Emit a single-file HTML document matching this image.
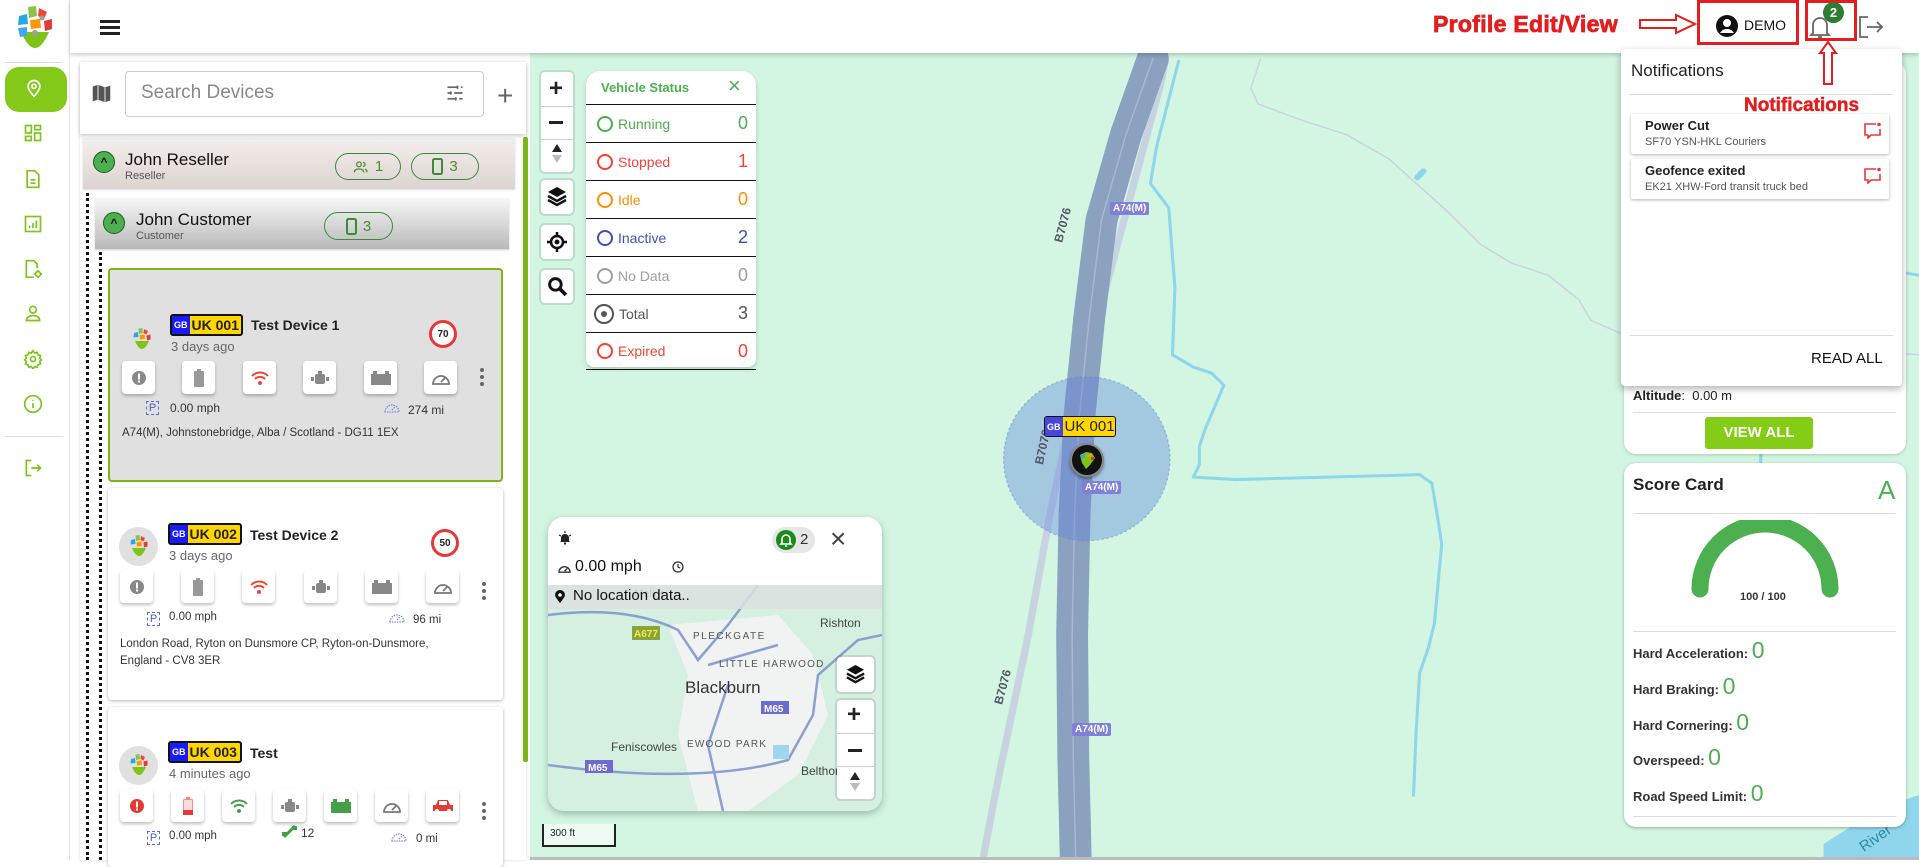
<!DOCTYPE html>
<html><head><meta charset="utf-8">
<style>
*{box-sizing:border-box;margin:0;padding:0}
body{width:1919px;height:860px;overflow:hidden;position:relative;font-family:"Liberation Sans",Arial,sans-serif;background:#fff;color:#222}
.a{position:absolute;white-space:nowrap}
.sb{left:0;top:0;width:70px;height:860px;background:#fff;border-right:1px solid #e6e6e6}
.ico{position:absolute;left:23px;width:20px;height:20px}
.top{left:70px;top:0;width:1849px;height:53px;background:#fff;box-shadow:0 2px 4px rgba(0,0,0,.2);z-index:5}
.btn{position:absolute;width:33px;height:33px;background:#fff;border-radius:4px;box-shadow:0 2px 3px rgba(0,0,0,.25);display:flex;align-items:center;justify-content:center}
.plate{position:absolute;height:22px;border:2px solid #111;border-radius:3px;background:#ffd600;font-weight:bold;font-size:14px;display:flex;align-items:center;overflow:hidden;white-space:nowrap}
.plate b{background:#1a1aff;color:#fff;font-size:9px;height:100%;display:flex;align-items:center;padding:0 2px;margin-right:2px}
.spd{position:absolute;width:28px;height:28px;border:3px solid #e53935;border-radius:50%;background:#fff;font-size:10px;font-weight:bold;display:flex;align-items:center;justify-content:center}
.dots{position:absolute;width:4px}
.dots i{display:block;width:4px;height:4px;border-radius:2px;background:#666;margin-bottom:3px}
.card{position:absolute;left:108px;width:395px;background:#fff;border-radius:4px;box-shadow:0 1px 3px rgba(0,0,0,.3)}
.sm{font-size:12px;color:#333}
.vs{position:absolute;left:0;width:170px;height:38px;border-top:1.5px solid #111;font-size:14px;display:flex;align-items:center;padding-left:11px}
.vs i{width:16px;height:16px;border:2px solid currentColor;border-radius:50%;margin-right:5px}
.vs span{position:absolute;right:8px;font-size:18px}
.mc{position:absolute;background:#fff;border-radius:4px;box-shadow:0 0 0 2px rgba(0,0,0,.1)}
.pill{position:absolute;height:27px;border:1.5px solid #3a8a3a;border-radius:14px;display:flex;align-items:center;justify-content:center;font-size:15px;color:#4a8f2a;gap:6px}
.sc{position:absolute;left:1633px;font-size:13px;font-weight:bold;color:#333;white-space:nowrap}
.sc span{color:#4caf50;font-size:23px;font-weight:normal}
</style></head><body>

<!-- MAP -->
<div class="a" style="left:530px;top:53px;width:1389px;height:807px;background:#d2f6e1"></div>
<svg class="a" style="left:0;top:0" width="1919" height="860" viewBox="0 0 1568 703" preserveAspectRatio="none">
 <g fill="none" stroke-linecap="round" stroke-linejoin="round">
  <path d="M1030 48 L1022 72 L1028 85 L1060 97 L1100 110 L1135 130 L1185 175 L1210 200 L1235 215 L1265 225 L1290 245 L1300 262 L1330 275 L1568 290" stroke="#cfd0e0" stroke-width="1.2"/>
  <path d="M963 50 L945 120 L940 150 L955 170 L960 235 L958 290 L975 300 L990 305 L1000 315 L985 350 L980 365 L980 380 L975 390 L1010 392 L1160 388 L1170 395 L1175 425 L1178 445 L1172 510 L1167 530 L1160 550 L1157 600 L1155 650" stroke="#8fd6ec" stroke-width="2.5"/>
  <path d="M1465 170 L1520 210 L1550 222 L1568 225" stroke="#8fd6ec" stroke-width="2.5"/>
  <path d="M1440 300 L1439 360 M1439 365 L1436 470" stroke="#8fd6ec" stroke-width="2.5"/>
  <path d="M1158 145 L1163 140" stroke="#8fd6ec" stroke-width="5"/>
  <path d="M952 50 L948 70 L905 230 L875 340 L858 420 L840 520 L815 640 L803 703" stroke="#c8d3e2" stroke-width="6"/>
  <path d="M942 48 L920 110 L900 180 L890 260 L882 340 L878 420 L876 520 L877 620 L879 703" stroke="#8ca0c0" stroke-width="26"/>
  <path d="M942 48 L920 110 L900 180 L890 260 L882 340 L878 420 L876 520 L877 620 L879 703" stroke="#a8b8d0" stroke-width="1.2"/>
  <path d="M1490 690 C1520 670 1550 655 1568 650 L1568 703 L1490 703Z" fill="#8fd6ec" stroke="none"/>
 </g>
 <ellipse cx="888" cy="375" rx="68" ry="67" fill="rgba(96,132,222,.4)" stroke="rgba(96,132,222,.5)" stroke-dasharray="2 2"/>
</svg>
<!-- map labels -->
<div class="a" style="left:1110px;top:202px;font-size:10px;font-weight:bold;color:#fff;background:#8080d8;padding:1px 3px;border-radius:2px">A74(M)</div>
<div class="a" style="left:1082px;top:481px;font-size:10px;font-weight:bold;color:#fff;background:#8080d8;padding:1px 3px;border-radius:2px">A74(M)</div>
<div class="a" style="left:1072px;top:723px;font-size:10px;font-weight:bold;color:#fff;background:#8080d8;padding:1px 3px;border-radius:2px">A74(M)</div>
<div class="a" style="left:1045px;top:218px;font-size:12px;color:#556;transform:rotate(-75deg);font-weight:bold">B7076</div>
<div class="a" style="left:1025px;top:440px;font-size:12px;color:#556;transform:rotate(-78deg);font-weight:bold">B7076</div>
<div class="a" style="left:985px;top:680px;font-size:12px;color:#556;transform:rotate(-75deg);font-weight:bold">B7076</div>
<div class="a" style="left:1858px;top:830px;font-size:15px;color:#2a8aaa;transform:rotate(-35deg)">River</div>
<!-- marker -->
<div class="plate" style="left:1044px;top:416px;width:72px;height:21px;border-width:1px;font-size:15px;font-weight:normal"><b style="background:#4646d8">GB</b>UK 001</div>
<div class="a" style="left:1070px;top:443px;width:34px;height:34px;border-radius:50%;background:#111;border:2px solid #888;box-shadow:0 2px 3px rgba(0,0,0,.4)">
<svg width="30" height="30" viewBox="0 0 30 30"><path d="M8 10 L14 7 L20 8 L23 13 L18 20 L14 24 L10 18Z" fill="#7cc417"/><rect x="9" y="9" width="4" height="4" fill="#3ba7e0"/><rect x="15" y="9" width="4" height="3" fill="#f4a000"/><rect x="19" y="12" width="3" height="3" fill="#e33"/></svg></div>

<!-- SIDEBAR -->
<div class="a sb"></div>
<svg class="a" style="left:15px;top:4px" width="40" height="52" viewBox="0 0 40 52">
 <path d="M6 28 Q20 60 34 28Z" fill="#7cc417"/>
 <path d="M13 3 L21 2 L22 12 L14 14Z" fill="#8bc34a"/><path d="M24 4 L32 8 L29 15 L23 12Z" fill="#f44336"/>
 <path d="M4 12 L12 10 L13 20 L3 21Z" fill="#29a8e0"/><path d="M15 16 L25 15 L26 24 L16 25Z" fill="#ff9800"/>
 <path d="M29 17 L37 15 L37 25 L30 27Z" fill="#e53935"/><path d="M3 24 L12 23 L12 32 L5 33Z" fill="#42a5f5"/>
 <circle cx="20" cy="29" r="3" fill="#9e9e9e"/><circle cx="27" cy="14" r="2.5" fill="#9e9e9e"/>
</svg>
<div class="a" style="left:5px;top:62px;width:58px;height:1px;background:#ddd"></div>
<div class="a" style="left:5px;top:67px;width:62px;height:45px;background:#84c91a;border-radius:14px"></div>
<svg class="ico" style="top:78px;left:24px" viewBox="0 0 24 24" fill="none" stroke="#fff" stroke-width="2"><path d="M12 22s7-7 7-12a7 7 0 0 0-14 0c0 5 7 12 7 12z"/><circle cx="12" cy="10" r="2.5"/></svg>
<svg class="ico" style="top:123px" viewBox="0 0 24 24" fill="none" stroke="#7cc417" stroke-width="2"><rect x="3" y="3" width="7" height="9"/><rect x="14" y="3" width="7" height="5"/><rect x="14" y="12" width="7" height="9"/><rect x="3" y="16" width="7" height="5"/></svg>
<svg class="ico" style="top:169px" viewBox="0 0 24 24" fill="none" stroke="#7cc417" stroke-width="2"><path d="M5 2h9l5 5v15H5z"/><path d="M9 13h6M9 17h6"/></svg>
<svg class="ico" style="top:214px" viewBox="0 0 24 24" fill="none" stroke="#7cc417" stroke-width="2"><rect x="3" y="3" width="18" height="18"/><path d="M8 17v-3M12 17v-6M16 17v-9"/></svg>
<svg class="ico" style="top:259px" viewBox="0 0 24 24" fill="none" stroke="#7cc417" stroke-width="2"><path d="M13 22H4V2h9l4 4v5"/><circle cx="18" cy="18" r="3"/><path d="M18 13v2M18 21v2M13 18h2M21 18h2"/></svg>
<svg class="ico" style="top:303px" viewBox="0 0 24 24" fill="none" stroke="#7cc417" stroke-width="2"><circle cx="12" cy="8" r="4"/><path d="M4 21c0-4 4-6 8-6s8 2 8 6z"/></svg>
<svg class="ico" style="top:349px" viewBox="0 0 24 24" fill="none" stroke="#7cc417" stroke-width="2"><circle cx="12" cy="12" r="3"/><path d="M12 2l2 3 3-1 1 3 3 1-1 3 2 2-2 2 1 3-3 1-1 3-3-1-2 3-2-3-3 1-1-3-3-1 1-3-2-2 2-2-1-3 3-1 1-3 3 1z"/></svg>
<svg class="ico" style="top:394px" viewBox="0 0 24 24" fill="none" stroke="#7cc417" stroke-width="2"><circle cx="12" cy="12" r="10"/><path d="M12 11v6M12 7v1"/></svg>
<div class="a" style="left:5px;top:436px;width:58px;height:1px;background:#ddd"></div>
<svg class="ico" style="top:458px" viewBox="0 0 24 24" fill="none" stroke="#7cc417" stroke-width="2"><path d="M10 3H4v18h6"/><path d="M10 12h11M17 8l4 4-4 4"/></svg>

<!-- TOP BAR -->
<div class="a top"></div>
<div class="a" style="left:100px;top:20px;width:20px;z-index:6"><i style="display:block;height:2.5px;background:#222;margin-bottom:3.5px"></i><i style="display:block;height:2.5px;background:#222;margin-bottom:3.5px"></i><i style="display:block;height:2.5px;background:#222"></i></div>
<div class="a" style="left:1433px;top:11px;font-size:23px;font-weight:900;color:#e41e1e;z-index:6;font-family:'Liberation Sans',sans-serif;-webkit-text-stroke:.8px #e41e1e;letter-spacing:.3px">Profile Edit/View</div>
<svg class="a" style="left:1639px;top:13px;z-index:6" width="58" height="22"><path d="M1 7h36V2l19 9-19 9v-5H1z" fill="#fff" stroke="#e41e1e" stroke-width="2"/></svg>
<div class="a" style="left:1697px;top:0;width:102px;height:45px;border:3px solid #e41e1e;z-index:6"></div>
<svg class="a" style="left:1715px;top:14px;z-index:6" width="24" height="24" viewBox="0 0 24 24"><circle cx="12" cy="12" r="11" fill="#111"/><circle cx="12" cy="9" r="4" fill="#fff"/><path d="M5 19c2-3 4-4 7-4s5 1 7 4" fill="#fff"/></svg>
<div class="a" style="left:1744px;top:17px;font-size:14px;z-index:6;color:#111">DEMO</div>
<div class="a" style="left:1805px;top:0;width:52px;height:41px;border:3px solid #e41e1e;z-index:6"></div>
<svg class="a" style="left:1809px;top:14px;z-index:6" width="22" height="26" viewBox="0 0 22 26" fill="none" stroke="#666" stroke-width="1.8"><path d="M4 19V11a7 7 0 0 1 14 0v8l2 2H2z"/><path d="M9 23h4"/></svg>
<div class="a" style="left:1823px;top:2px;width:21px;height:21px;border-radius:50%;background:#2e7d32;color:#fff;font-size:13px;font-weight:bold;text-align:center;line-height:21px;z-index:7">2</div>
<svg class="a" style="left:1818px;top:40px;z-index:10" width="20" height="46"><path d="M10 2l8 11h-4v31H6V13H2z" fill="#fff" stroke="#e41e1e" stroke-width="2"/></svg>
<svg class="a" style="left:1858px;top:15px;z-index:6" width="26" height="24" viewBox="0 0 26 24" fill="none" stroke="#666" stroke-width="1.8"><path d="M10 2H2v20h8"/><path d="M9 12h15M19 7l5 5-5 5"/></svg>

<!-- LEFT PANEL -->
<div class="a" style="left:80px;top:62px;width:446px;height:798px;background:#fff;box-shadow:0 0 3px rgba(0,0,0,.15)"></div>
<div class="a" style="left:80px;top:62px;width:446px;height:72px;background:#fff;box-shadow:0 2px 4px rgba(0,0,0,.2);z-index:2"></div>
<svg class="a" style="left:91px;top:83px;z-index:3" width="21" height="21" viewBox="0 0 24 24"><path d="M2 4l6-2 8 3 6-2v17l-6 2-8-3-6 2z" fill="#555"/><path d="M8 2v17M16 5v17" stroke="#fff" stroke-width="1"/></svg>
<div class="a" style="left:125px;top:71px;width:359px;height:46px;border:1px solid #ccc;border-radius:4px;z-index:3"></div>
<div class="a" style="left:141px;top:82px;font-size:19px;color:#888;z-index:3">Search Devices</div>
<svg class="a" style="left:445px;top:83px;z-index:3" width="20" height="20" viewBox="0 0 24 24" stroke="#666" stroke-width="2"><path d="M3 5h12M19 5h2M3 12h4M11 12h10M3 19h10M17 19h4M15 3v4M7 10v4M13 17v4"/></svg>
<div class="a" style="left:497px;top:80px;font-size:28px;color:#666;z-index:3;font-weight:300">+</div>
<div class="a" style="left:523px;top:137px;width:5px;height:625px;background:#7cb518;border-radius:2px"></div>

<!-- reseller -->
<div class="a" style="left:83px;top:138px;width:432px;height:51px;background:linear-gradient(#f3eeec,#ddd4d1);box-shadow:0 1px 2px rgba(0,0,0,.15)"></div>
<div class="a" style="left:93px;top:151px;width:22px;height:22px;border-radius:50%;background:#4caf50;border:1.5px solid #1b5e20;color:#111;font-size:12px;text-align:center;line-height:20px;font-weight:bold">^</div>
<div class="a" style="left:125px;top:150px;font-size:17px;color:#111">John Reseller</div>
<div class="a" style="left:125px;top:170px;font-size:11px;color:#555">Reseller</div>
<div class="pill" style="left:335px;top:153px;width:66px"><svg width="16" height="14" viewBox="0 0 24 20" fill="none" stroke="#4a8f2a" stroke-width="2"><circle cx="9" cy="6" r="3.5"/><path d="M2 18c0-4 3-5 7-5s7 1 7 5"/><path d="M15 3a3 3 0 0 1 0 6M18 13c2 1 3 2 3 5"/></svg>1</div>
<div class="pill" style="left:411px;top:153px;width:68px"><svg width="11" height="17" viewBox="0 0 11 17"><rect x="1" y="1" width="9" height="15" rx="1.5" fill="none" stroke="#3a8a3a" stroke-width="2"/></svg>3</div>
<div class="a" style="left:86px;top:193px;height:667px;border-left:3px dotted #111"></div>
<!-- customer -->
<div class="a" style="left:95px;top:198px;width:414px;height:51px;background:linear-gradient(#f7f7f7,#b9b9b9);box-shadow:0 1px 2px rgba(0,0,0,.2)"></div>
<div class="a" style="left:103px;top:212px;width:22px;height:22px;border-radius:50%;background:#4caf50;border:1.5px solid #1b5e20;color:#111;font-size:12px;text-align:center;line-height:20px;font-weight:bold">^</div>
<div class="a" style="left:136px;top:210px;font-size:17px;color:#111">John Customer</div>
<div class="a" style="left:136px;top:230px;font-size:11px;color:#555">Customer</div>
<div class="pill" style="left:324px;top:212px;width:69px;height:28px"><svg width="11" height="17" viewBox="0 0 11 17"><rect x="1" y="1" width="9" height="15" rx="1.5" fill="none" stroke="#3a8a3a" stroke-width="2"/></svg>3</div>
<div class="a" style="left:99px;top:252px;height:608px;border-left:3px dotted #111"></div>

<!-- Card 1 -->
<div class="card" style="top:268px;height:214px;background:#e0e0e0;border:2px solid #7cb518;box-shadow:none"></div>
<svg class="a" style="left:131px;top:327px" width="22" height="26" viewBox="0 0 40 52"><path d="M6 28 Q20 60 34 28Z" fill="#7cc417"/><path d="M13 3 L21 2 L22 12 L14 14Z" fill="#8bc34a"/><path d="M24 4 L32 8 L29 15 L23 12Z" fill="#f44336"/><path d="M4 12 L12 10 L13 20 L3 21Z" fill="#29a8e0"/><path d="M15 16 L25 15 L26 24 L16 25Z" fill="#ff9800"/><path d="M29 17 L37 15 L37 25 L30 27Z" fill="#e53935"/></svg>
<div class="plate" style="left:170px;top:314px;width:73px"><b>GB</b>UK 001</div>
<div class="a" style="left:251px;top:317px;font-size:14px;font-weight:bold">Test Device 1</div>
<div class="a" style="left:171px;top:339px;font-size:13px;color:#666">3 days ago</div>
<div class="spd" style="left:429px;top:320px">70</div>

<!-- Card 2 -->
<div class="card" style="top:488px;height:212px"></div>
<div class="a" style="left:119px;top:527px;width:39px;height:39px;border-radius:50%;background:#e0e0e0"></div>
<svg class="a" style="left:128px;top:534px" width="22" height="26" viewBox="0 0 40 52"><path d="M6 28 Q20 60 34 28Z" fill="#7cc417"/><path d="M13 3 L21 2 L22 12 L14 14Z" fill="#8bc34a"/><path d="M24 4 L32 8 L29 15 L23 12Z" fill="#f44336"/><path d="M4 12 L12 10 L13 20 L3 21Z" fill="#29a8e0"/><path d="M15 16 L25 15 L26 24 L16 25Z" fill="#ff9800"/><path d="M29 17 L37 15 L37 25 L30 27Z" fill="#e53935"/></svg>
<div class="plate" style="left:168px;top:523px;width:74px"><b>GB</b>UK 002</div>
<div class="a" style="left:250px;top:527px;font-size:14px;font-weight:bold">Test Device 2</div>
<div class="a" style="left:169px;top:548px;font-size:13px;color:#666">3 days ago</div>
<div class="spd" style="left:431px;top:529px">50</div>

<!-- Card 3 -->
<div class="card" style="top:707px;height:160px"></div>
<div class="a" style="left:119px;top:746px;width:39px;height:39px;border-radius:50%;background:#e0e0e0"></div>
<svg class="a" style="left:128px;top:753px" width="22" height="26" viewBox="0 0 40 52"><path d="M6 28 Q20 60 34 28Z" fill="#7cc417"/><path d="M13 3 L21 2 L22 12 L14 14Z" fill="#8bc34a"/><path d="M24 4 L32 8 L29 15 L23 12Z" fill="#f44336"/><path d="M4 12 L12 10 L13 20 L3 21Z" fill="#29a8e0"/><path d="M15 16 L25 15 L26 24 L16 25Z" fill="#ff9800"/><path d="M29 17 L37 15 L37 25 L30 27Z" fill="#e53935"/></svg>
<div class="plate" style="left:168px;top:741px;width:74px"><b>GB</b>UK 003</div>
<div class="a" style="left:250px;top:745px;font-size:14px;font-weight:bold">Test</div>
<div class="a" style="left:169px;top:766px;font-size:13px;color:#666">4 minutes ago</div>

<!-- Card1 buttons -->
<div class="btn" style="left:122px;top:361px"><svg width="16" height="16" viewBox="0 0 16 16"><circle cx="8" cy="8" r="7" fill="#888"/><rect x="7" y="3.5" width="2" height="6" fill="#fff"/><rect x="7" y="10.5" width="2" height="2" fill="#fff"/></svg></div>
<div class="btn" style="left:182px;top:361px"><svg width="10" height="18"><rect x="3" y="0" width="4" height="2" fill="#999"/><rect x="0" y="2" width="10" height="16" rx="1" fill="#999"/></svg></div>
<div class="btn" style="left:243px;top:361px"><svg width="18" height="14" viewBox="0 0 18 14" fill="none" stroke="#f44336" stroke-width="2"><path d="M1 5a11 11 0 0 1 16 0M4 8a7 7 0 0 1 10 0"/><circle cx="9" cy="12" r="1" fill="#f44336"/></svg></div>
<div class="btn" style="left:303px;top:361px"><svg width="20" height="14" viewBox="0 0 20 14"><rect x="5" y="3" width="10" height="10" rx="2" fill="#888"/><rect x="8" y="0" width="4" height="3" fill="#888"/><rect x="1" y="6" width="3" height="4" fill="#888"/><rect x="16" y="6" width="3" height="4" fill="#888"/></svg></div>
<div class="btn" style="left:364px;top:361px"><svg width="20" height="14"><rect x="0" y="3" width="20" height="11" fill="#888"/><rect x="2" y="0" width="4" height="3" fill="#888"/><rect x="14" y="0" width="4" height="3" fill="#888"/></svg></div>
<div class="btn" style="left:424px;top:361px"><svg width="20" height="16" viewBox="0 0 20 16" fill="none" stroke="#777" stroke-width="1.8"><path d="M2 14a8 8 0 1 1 16 0z"/><path d="M10 12l4-4"/></svg></div>
<div class="dots" style="left:480px;top:368px"><i></i><i></i><i></i></div>
<div class="a" style="left:146px;top:401px;width:13px;height:14px;border:1px dashed #5b6ed0;color:#4a5cc8;font-size:11px;text-align:center;line-height:12px">P</div>
<div class="a sm" style="left:170px;top:401px">0.00 mph</div>
<svg class="a" style="left:384px;top:400px" width="16" height="14" viewBox="0 0 16 14" fill="none" stroke="#7a8ad8" stroke-width="1.2" stroke-dasharray="1.5 1"><path d="M1 12a7 7 0 1 1 14 0z"/><path d="M8 10l3-3"/></svg>
<div class="a sm" style="left:408px;top:403px">274 mi</div>
<div class="a sm" style="left:122px;top:427px;font-size:11.5px">A74(M), Johnstonebridge, Alba / Scotland - DG11 1EX</div>

<!-- Card2 buttons -->
<div class="btn" style="left:120px;top:570px"><svg width="16" height="16" viewBox="0 0 16 16"><circle cx="8" cy="8" r="7" fill="#888"/><rect x="7" y="3.5" width="2" height="6" fill="#fff"/><rect x="7" y="10.5" width="2" height="2" fill="#fff"/></svg></div>
<div class="btn" style="left:181px;top:570px"><svg width="10" height="18"><rect x="3" y="0" width="4" height="2" fill="#999"/><rect x="0" y="2" width="10" height="16" rx="1" fill="#999"/></svg></div>
<div class="btn" style="left:242px;top:570px"><svg width="18" height="14" viewBox="0 0 18 14" fill="none" stroke="#f44336" stroke-width="2"><path d="M1 5a11 11 0 0 1 16 0M4 8a7 7 0 0 1 10 0"/><circle cx="9" cy="12" r="1" fill="#f44336"/></svg></div>
<div class="btn" style="left:304px;top:570px"><svg width="20" height="14" viewBox="0 0 20 14"><rect x="5" y="3" width="10" height="10" rx="2" fill="#888"/><rect x="8" y="0" width="4" height="3" fill="#888"/><rect x="1" y="6" width="3" height="4" fill="#888"/><rect x="16" y="6" width="3" height="4" fill="#888"/></svg></div>
<div class="btn" style="left:365px;top:570px"><svg width="20" height="14"><rect x="0" y="3" width="20" height="11" fill="#888"/><rect x="2" y="0" width="4" height="3" fill="#888"/><rect x="14" y="0" width="4" height="3" fill="#888"/></svg></div>
<div class="btn" style="left:426px;top:570px"><svg width="20" height="16" viewBox="0 0 20 16" fill="none" stroke="#777" stroke-width="1.8"><path d="M2 14a8 8 0 1 1 16 0z"/><path d="M10 12l4-4"/></svg></div>
<div class="dots" style="left:482px;top:582px"><i></i><i></i><i></i></div>
<div class="a" style="left:147px;top:612px;width:13px;height:14px;border:1px dashed #5b6ed0;color:#4a5cc8;font-size:11px;text-align:center;line-height:12px">P</div>
<div class="a sm" style="left:169px;top:611px;font-size:11.5px">0.00 mph</div>
<svg class="a" style="left:389px;top:610px" width="16" height="14" viewBox="0 0 16 14" fill="none" stroke="#7a8ad8" stroke-width="1.2" stroke-dasharray="1.5 1"><path d="M1 12a7 7 0 1 1 14 0z"/><path d="M8 10l3-3"/></svg>
<div class="a sm" style="left:413px;top:614px;font-size:11.5px">96 mi</div>
<div class="a sm" style="left:120px;top:636px;font-size:11.5px;line-height:17px">London Road, Ryton on Dunsmore CP, Ryton-on-Dunsmore,<br>England - CV8 3ER</div>

<!-- Card3 buttons -->
<div class="btn" style="left:120px;top:789px"><svg width="16" height="16" viewBox="0 0 16 16"><circle cx="8" cy="8" r="7" fill="#e53935"/><rect x="7" y="3.5" width="2" height="6" fill="#fff"/><rect x="7" y="10.5" width="2" height="2" fill="#fff"/></svg></div>
<div class="btn" style="left:171px;top:789px"><svg width="10" height="18"><rect x="3" y="0" width="4" height="2" fill="#f77"/><rect x="0.5" y="2.5" width="9" height="15" rx="1" fill="#fdd" stroke="#f88"/><rect x="0" y="13" width="10" height="5" fill="#e53935"/></svg></div>
<div class="btn" style="left:222px;top:789px"><svg width="18" height="14" viewBox="0 0 18 14" fill="none" stroke="#43a047" stroke-width="2"><path d="M1 5a11 11 0 0 1 16 0M4 8a7 7 0 0 1 10 0"/><circle cx="9" cy="12" r="1" fill="#43a047"/></svg></div>
<div class="btn" style="left:273px;top:789px"><svg width="20" height="14" viewBox="0 0 20 14"><rect x="5" y="3" width="10" height="10" rx="2" fill="#888"/><rect x="8" y="0" width="4" height="3" fill="#888"/><rect x="1" y="6" width="3" height="4" fill="#888"/><rect x="16" y="6" width="3" height="4" fill="#888"/></svg></div>
<div class="btn" style="left:324px;top:789px"><svg width="20" height="14"><rect x="0" y="3" width="20" height="11" fill="#43a047"/><rect x="2" y="0" width="4" height="3" fill="#43a047"/><rect x="14" y="0" width="4" height="3" fill="#43a047"/></svg></div>
<div class="btn" style="left:375px;top:789px"><svg width="20" height="16" viewBox="0 0 20 16" fill="none" stroke="#777" stroke-width="1.8"><path d="M2 14a8 8 0 1 1 16 0z"/><path d="M10 12l4-4"/></svg></div>
<div class="btn" style="left:426px;top:789px"><svg width="22" height="14" viewBox="0 0 22 14"><path d="M4 6l2-5h10l2 5h3v6H1V6z" fill="#e53935"/><rect x="7" y="2" width="8" height="4" fill="#fff"/><circle cx="5" cy="12" r="2" fill="#fff"/><circle cx="17" cy="12" r="2" fill="#fff"/></svg></div>
<div class="dots" style="left:482px;top:802px"><i></i><i></i><i></i></div>
<div class="a" style="left:147px;top:831px;width:13px;height:14px;border:1px dashed #5b6ed0;color:#4a5cc8;font-size:11px;text-align:center;line-height:12px">P</div>
<div class="a sm" style="left:169px;top:830px;font-size:11.5px">0.00 mph</div>
<svg class="a" style="left:281px;top:823px" width="17" height="17" viewBox="0 0 17 17"><path d="M3 14l11-11" stroke="#43a047" stroke-width="3"/><rect x="1" y="9" width="5" height="4" fill="#43a047"/><rect x="11" y="3" width="5" height="4" fill="#43a047"/></svg>
<div class="a sm" style="left:301px;top:826px;font-size:12px">12</div>
<svg class="a" style="left:391px;top:829px" width="16" height="14" viewBox="0 0 16 14" fill="none" stroke="#7a8ad8" stroke-width="1.2" stroke-dasharray="1.5 1"><path d="M1 12a7 7 0 1 1 14 0z"/><path d="M8 10l3-3"/></svg>
<div class="a sm" style="left:416px;top:833px;font-size:11.5px">0 mi</div>

<!-- MAP CONTROLS -->
<div class="mc" style="left:541px;top:72px;width:32px;height:100px"></div>
<div class="a" style="left:549px;top:75px;font-size:24px;font-weight:bold">+</div>
<div class="a" style="left:541px;top:106px;width:32px;height:1px;background:#ccc"></div>
<div class="a" style="left:549px;top:121px;width:14px;height:3px;background:#222"></div>
<div class="a" style="left:541px;top:139px;width:32px;height:1px;background:#ccc"></div>
<div class="a" style="left:552px;top:144px;width:0;height:0;border:5px solid transparent;border-bottom:8px solid #222;border-top:0"></div>
<div class="a" style="left:552px;top:155px;width:0;height:0;border:5px solid transparent;border-top:8px solid #bbb;border-bottom:0"></div>
<div class="mc" style="left:541px;top:180px;width:32px;height:34px"><svg style="margin:6px" width="20" height="22" viewBox="0 0 20 22"><path d="M10 1l9 5-9 5-9-5z" fill="#111"/><path d="M1 10l9 5 9-5M1 14l9 5 9-5" fill="none" stroke="#111" stroke-width="2.5"/></svg></div>
<div class="mc" style="left:541px;top:225px;width:32px;height:34px"><svg style="margin:6px" width="20" height="22" viewBox="0 0 20 20"><circle cx="10" cy="10" r="6" fill="none" stroke="#111" stroke-width="2.5"/><circle cx="10" cy="10" r="2.5" fill="#111"/><path d="M10 0v4M10 16v4M0 10h4M16 10h4" stroke="#111" stroke-width="2.5"/></svg></div>
<div class="mc" style="left:541px;top:270px;width:32px;height:33px"><svg style="margin:6px" width="21" height="21" viewBox="0 0 20 20"><circle cx="8" cy="8" r="5.5" fill="none" stroke="#111" stroke-width="2.8"/><path d="M12 12l6 6" stroke="#111" stroke-width="3.5"/></svg></div>

<!-- VEHICLE STATUS -->
<div class="a" style="left:586px;top:71px;width:170px;height:296px;background:#fff;border-radius:14px 14px 8px 8px;box-shadow:0 2px 4px rgba(0,0,0,.2)">
 <div class="a" style="left:15px;top:9px;font-size:13px;font-weight:bold;color:#4caf50">Vehicle Status</div>
 <div class="a" style="left:142px;top:2px;font-size:22px;color:#4caf50">×</div>
 <div class="vs" style="top:33px;color:#4caf50"><i></i>Running<span>0</span></div>
 <div class="vs" style="top:71px;color:#f44336"><i></i>Stopped<span>1</span></div>
 <div class="vs" style="top:109px;color:#ff8f00"><i></i>Idle<span>0</span></div>
 <div class="vs" style="top:147px;color:#3f51b5"><i></i>Inactive<span>2</span></div>
 <div class="vs" style="top:185px;color:#9e9e9e"><i></i>No Data<span>0</span></div>
 <div class="vs" style="top:223px;color:#555;padding-left:8px"><i style="width:20px;height:20px;border-width:2.5px;display:flex;align-items:center;justify-content:center"><b style="width:6px;height:6px;border-radius:3px;background:#555"></b></i>Total<span>3</span></div>
 <div class="vs" style="top:261px;color:#f44336;border-bottom:1.5px solid #111"><i></i>Expired<span>0</span></div>
</div>

<!-- MINI POPUP -->
<div class="a" style="left:548px;top:517px;width:334px;height:294px;border-radius:16px;overflow:hidden;background:#d7f2df;box-shadow:0 3px 8px rgba(0,0,0,.25)">
 <svg class="a" style="left:0;top:68px" width="334" height="226" viewBox="0 0 334 226">
  <rect width="334" height="226" fill="#d5efe0"/>
  <path d="M120 40 L230 30 L265 70 L280 130 L250 190 L200 226 L150 226 L130 150 L140 90Z" fill="#f1f3f3"/>
  <g fill="none" stroke="#8b9fd0" stroke-width="2.5"><path d="M0 30 Q80 20 130 45 L150 75 L180 40 L210 0"/><path d="M0 180 Q150 200 240 175 L265 130 L270 90 L310 55 L334 50"/><path d="M180 100 L160 160 L175 226"/><path d="M160 80 L230 60"/></g>
  <rect x="84" y="41" width="28" height="14" fill="#86a53a"/><text x="86" y="52" font-size="10" fill="#ffe14d" font-weight="bold" font-family="Liberation Sans">A677</text>
  <rect x="213" y="116" width="28" height="13" fill="#6b6bd0"/><text x="216" y="127" font-size="10" fill="#fff" font-weight="bold" font-family="Liberation Sans">M65</text>
  <rect x="37" y="175" width="28" height="13" fill="#6b6bd0"/><text x="40" y="186" font-size="10" fill="#fff" font-weight="bold" font-family="Liberation Sans">M65</text>
  <rect x="225" y="160" width="16" height="14" fill="#9fd8ee"/>
  <text x="86" y="12" font-size="11" fill="#555" font-family="Liberation Sans">Mellor</text>
  <text x="145" y="54" font-size="10" fill="#555" letter-spacing="1.5" font-family="Liberation Sans">PLECKGATE</text>
  <text x="272" y="42" font-size="12" fill="#444" font-family="Liberation Sans">Rishton</text>
  <text x="171" y="82" font-size="10" fill="#555" letter-spacing="1.2" font-family="Liberation Sans">LITTLE HARWOOD</text>
  <text x="137" y="108" font-size="17" fill="#333" font-family="Liberation Sans">Blackburn</text>
  <text x="63" y="166" font-size="12" fill="#444" font-family="Liberation Sans">Feniscowles</text>
  <text x="139" y="162" font-size="10" fill="#555" letter-spacing="1.2" font-family="Liberation Sans">EWOOD PARK</text>
  <text x="253" y="190" font-size="12" fill="#444" font-family="Liberation Sans">Belthorn</text>
 </svg>
 <div class="a" style="left:0;top:0;width:334px;height:68px;background:#fff"></div>
 <div class="a" style="left:0;top:68px;width:334px;height:24px;background:rgba(220,225,225,.85)"></div>
 <svg class="a" style="left:10px;top:14px" width="14" height="14" viewBox="0 0 14 14"><path d="M3 10V7a4 4 0 0 1 8 0v3l1 1H2z" fill="#222"/><rect x="6" y="11.5" width="2" height="2" fill="#222"/><path d="M1 4l2 1M13 4l-2 1M7 0v2" stroke="#222" stroke-width="1.2"/></svg>
 <div class="a" style="left:224px;top:10px;width:43px;height:26px;border-radius:13px;background:#e6e6e6"></div>
 <div class="a" style="left:228px;top:13px;width:20px;height:20px;border-radius:50%;background:#1b8a1b"><svg width="20" height="20" viewBox="0 0 20 20" fill="none" stroke="#fff" stroke-width="1.6"><path d="M6 13V9a4 4 0 0 1 8 0v4l1 1H5z"/><path d="M9 16h2"/></svg></div>
 <div class="a" style="left:252px;top:14px;font-size:15px;color:#333">2</div>
 <div class="a" style="left:282px;top:6px;font-size:28px;color:#444;font-weight:300">×</div>
 <svg class="a" style="left:10px;top:46px" width="13" height="11" viewBox="0 0 14 12" fill="none" stroke="#333" stroke-width="1.5"><path d="M1 10a6 6 0 1 1 12 0z"/><path d="M7 9l3-3"/></svg>
 <div class="a" style="left:27px;top:41px;font-size:16px;color:#111">0.00 mph</div>
 <svg class="a" style="left:124px;top:44px" width="12" height="12" viewBox="0 0 12 12" fill="none" stroke="#333" stroke-width="1.3"><circle cx="6" cy="6" r="5"/><path d="M6 3v3l2 1"/></svg>
 <svg class="a" style="left:7px;top:73px" width="10" height="13" viewBox="0 0 10 13"><path d="M5 13S0 7 0 5a5 5 0 0 1 10 0c0 2-5 8-5 8z" fill="#111"/><circle cx="5" cy="5" r="1.8" fill="#fff"/></svg>
 <div class="a" style="left:25px;top:70px;font-size:15px;color:#111">No location data..</div>
 <div class="a" style="left:289px;top:140px;width:37px;height:35px;background:#fff;border-radius:4px;box-shadow:0 0 0 2px rgba(0,0,0,.1)"><svg style="margin:7px 8px" width="21" height="21" viewBox="0 0 20 22"><path d="M10 1l9 5-9 5-9-5z" fill="#111"/><path d="M1 10l9 5 9-5M1 14l9 5 9-5" fill="none" stroke="#111" stroke-width="2.5"/></svg></div>
 <div class="a" style="left:289px;top:183px;width:37px;height:99px;background:#fff;border-radius:4px;box-shadow:0 0 0 2px rgba(0,0,0,.1)">
  <div class="a" style="left:10px;top:1px;font-size:24px;font-weight:bold">+</div>
  <div class="a" style="left:0;top:33px;width:37px;height:1px;background:#ccc"></div>
  <div class="a" style="left:11px;top:49px;width:14px;height:3px;background:#222"></div>
  <div class="a" style="left:0;top:66px;width:37px;height:1px;background:#ccc"></div>
  <div class="a" style="left:13px;top:72px;border:5px solid transparent;border-bottom:8px solid #222;border-top:0"></div>
  <div class="a" style="left:13px;top:83px;border:5px solid transparent;border-top:8px solid #bbb;border-bottom:0"></div>
 </div>
</div>
<div class="a" style="left:542px;top:824px;width:74px;height:23px;border:2px solid #222;border-top:none;background:rgba(255,255,255,.6);font-size:10px;padding:4px 0 0 6px">300 ft</div>

<!-- RIGHT CARDS -->
<div class="a" style="left:1624px;top:62px;width:282px;height:392px;background:#fff;border-radius:12px;box-shadow:0 1px 3px rgba(0,0,0,.2)"></div>
<div class="a" style="left:1633px;top:388px;font-size:13px;color:#222"><b>Altitude</b>:&nbsp; 0.00 m</div>
<div class="a" style="left:1633px;top:412px;width:263px;height:1px;background:#ddd"></div>
<div class="a" style="left:1705px;top:417px;width:108px;height:32px;background:#84cc16;border-radius:3px;color:#fff;font-weight:bold;font-size:15px;text-align:center;line-height:32px">VIEW ALL</div>

<div class="a" style="left:1624px;top:463px;width:282px;height:364px;background:#fff;border-radius:12px;box-shadow:0 1px 3px rgba(0,0,0,.3)"></div>
<div class="a" style="left:1633px;top:475px;font-size:17px;font-weight:bold;color:#222">Score Card</div>
<div class="a" style="left:1878px;top:475px;font-size:26px;color:#4caf50">A</div>
<div class="a" style="left:1633px;top:513px;width:263px;height:1px;background:#ddd"></div>
<svg class="a" style="left:1690px;top:520px" width="150" height="80"><path d="M10 69 A65 65 0 0 1 140 69" fill="none" stroke="#4caf50" stroke-width="17" stroke-linecap="round"/></svg>
<div class="a" style="left:1740px;top:591px;font-size:11px;font-weight:bold;color:#333">100 / 100</div>
<div class="a" style="left:1633px;top:631px;width:263px;height:1px;background:#ddd"></div>
<div class="sc" style="top:637px">Hard Acceleration: <span>0</span></div>
<div class="sc" style="top:673px">Hard Braking: <span>0</span></div>
<div class="sc" style="top:709px">Hard Cornering: <span>0</span></div>
<div class="sc" style="top:744px">Overspeed: <span>0</span></div>
<div class="sc" style="top:780px">Road Speed Limit: <span>0</span></div>
<div class="a" style="left:1633px;top:816px;width:263px;height:1px;background:#ddd"></div>

<!-- NOTIFICATIONS DROPDOWN -->
<div class="a" style="left:1621px;top:49px;width:281px;height:337px;background:#fff;border-radius:4px;box-shadow:0 3px 8px rgba(0,0,0,.3);z-index:8">
 <div class="a" style="left:10px;top:12px;font-size:17px;color:#222">Notifications</div>
 <div class="a" style="left:9px;top:45px;width:263px;height:1px;background:#ddd"></div>
 <div class="a" style="left:123px;top:46px;font-size:19px;font-weight:900;color:#e41e1e;-webkit-text-stroke:.5px #e41e1e">Notifications</div>
 <div class="a" style="left:10px;top:65px;width:258px;height:40px;box-shadow:0 1px 3px rgba(0,0,0,.3);border-radius:2px">
  <div class="a" style="left:14px;top:4px;font-size:13px;font-weight:bold">Power Cut</div>
  <div class="a" style="left:14px;top:22px;font-size:11px;color:#555">SF70 YSN-HKL Couriers</div>
  <svg class="a" style="left:233px;top:8px" width="18" height="17" viewBox="0 0 18 17" fill="none" stroke="#e53935" stroke-width="1.6"><path d="M12 2H1v11h3v3l3-3h9V7"/><circle cx="15" cy="2.5" r="1.8" fill="#e53935" stroke="none"/></svg>
 </div>
 <div class="a" style="left:10px;top:110px;width:258px;height:40px;box-shadow:0 1px 3px rgba(0,0,0,.3);border-radius:2px">
  <div class="a" style="left:14px;top:4px;font-size:13px;font-weight:bold">Geofence exited</div>
  <div class="a" style="left:14px;top:22px;font-size:11px;color:#555">EK21 XHW-Ford transit truck bed</div>
  <svg class="a" style="left:233px;top:8px" width="18" height="17" viewBox="0 0 18 17" fill="none" stroke="#e53935" stroke-width="1.6"><path d="M12 2H1v11h3v3l3-3h9V7"/><circle cx="15" cy="2.5" r="1.8" fill="#e53935" stroke="none"/></svg>
 </div>
 <div class="a" style="left:9px;top:286px;width:263px;height:1px;background:#ddd"></div>
 <div class="a" style="left:190px;top:301px;font-size:15px;color:#111">READ ALL</div>
</div>
<div class="a" style="left:530px;top:857px;width:1389px;height:3px;background:#bbb"></div>
</body></html>
